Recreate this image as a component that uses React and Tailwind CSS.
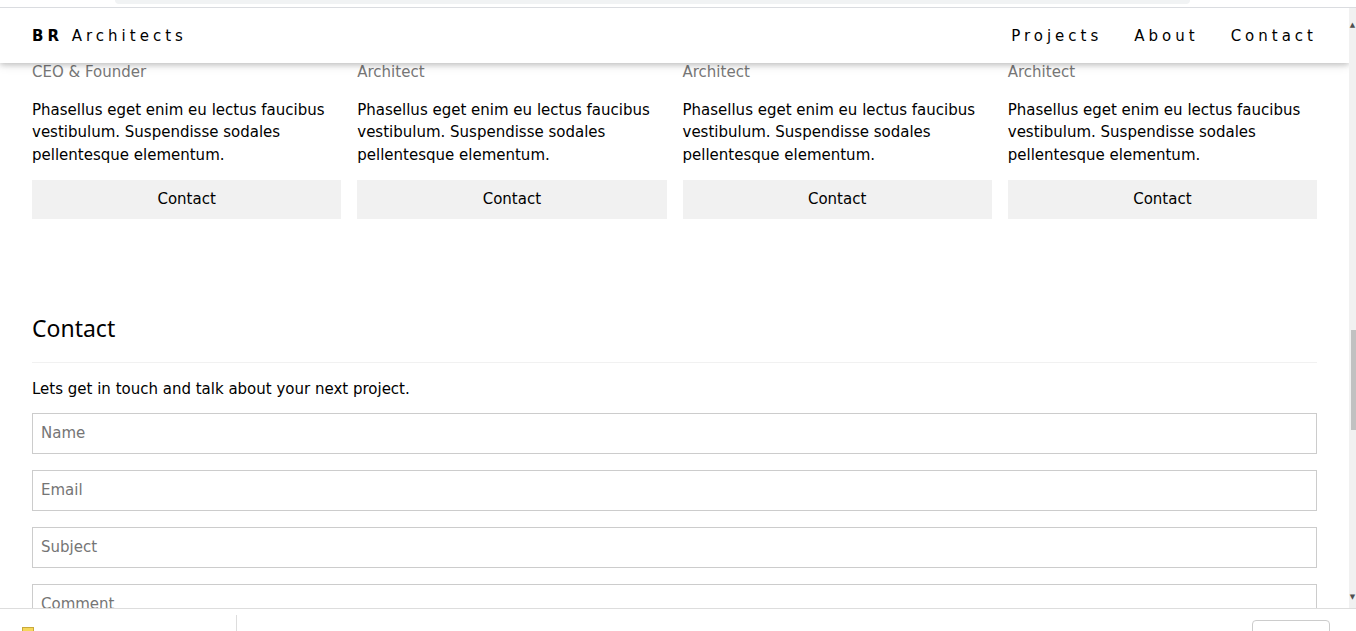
import React from 'react';

const members = [
  { role: 'CEO & Founder' },
  { role: 'Architect' },
  { role: 'Architect' },
  { role: 'Architect' },
];

export default function App() {
  return (
    <div className="h-screen w-full bg-white overflow-hidden flex flex-col text-black text-[15px] leading-[1.5] font-['DejaVu_Sans','Verdana',sans-serif]">
      {/* browser chrome remnant */}
      <div className="h-2 shrink-0 relative border-b border-[#dadce0]">
        <div className="absolute left-[115px] right-[166px] top-0 h-[4px] bg-[#f1f3f4] rounded-b-[8px]"></div>
      </div>

      <div className="flex-1 flex min-h-0">
        <main className="flex-1 relative overflow-hidden">
          {/* Navbar */}
          <header className="absolute top-0 left-0 right-0 z-10 h-[55px] pt-px bg-white px-4 flex items-center justify-between tracking-[4px] shadow-[0_2px_5px_0_rgba(0,0,0,0.16),0_2px_10px_0_rgba(0,0,0,0.12)]">
            <a href="#" className="px-4 py-2">
              <b>BR</b> Architects
            </a>
            <nav className="flex">
              <a href="#" className="px-4 py-2">Projects</a>
              <a href="#" className="px-4 py-2">About</a>
              <a href="#" className="px-4 py-2">Contact</a>
            </nav>
          </header>

          {/* Team */}
          <div className="px-8 pt-[53px]">
            <div className="grid grid-cols-4 gap-4">
              {members.map((m, i) => (
                <div key={i}>
                  <p className="text-[#777]">{m.role}</p>
                  <p className="mt-[15px]">
                    Phasellus eget enim eu lectus faucibus vestibulum. Suspendisse sodales pellentesque elementum.
                  </p>
                  <button className="mt-[14px] w-full h-[39px] bg-[#f1f1f1] text-center">Contact</button>
                </div>
              ))}
            </div>

            {/* Contact */}
            <h3 className="mt-[75px] py-4 border-b border-[#f1f1f1] text-[23px] leading-[36px] font-['Noto_Sans','Liberation_Sans',sans-serif] font-normal">
              Contact
            </h3>
            <p className="mt-[15px]">Lets get in touch and talk about your next project.</p>
            <div className="mt-[12px] flex flex-col gap-4">
              <input className="h-[41px] px-2 border border-[#ccc] placeholder:text-[#757575] outline-none" placeholder="Name" />
              <input className="h-[41px] px-2 border border-[#ccc] placeholder:text-[#757575] outline-none" placeholder="Email" />
              <input className="h-[41px] px-2 border border-[#ccc] placeholder:text-[#757575] outline-none" placeholder="Subject" />
              <input className="h-[41px] px-2 border border-[#ccc] placeholder:text-[#757575] outline-none" placeholder="Comment" />
            </div>
          </div>
        </main>

        {/* Scrollbar */}
        <div className="w-[7px] shrink-0 bg-[#f1f1f1] relative flex flex-col items-center">
          <span className="text-[7px] leading-[10px] mt-[12px] text-[#505050]">▲</span>
          <div className="absolute left-[2px] right-0 top-[322px] h-[100px] bg-[#c1c1c1]"></div>
          <span className="mt-auto mb-[6px] text-[7px] leading-[10px] text-[#505050]">▼</span>
        </div>
      </div>

      {/* bottom bar */}
      <div className="h-[23px] shrink-0 border-t border-[#ddd] bg-white relative">
        <div className="absolute left-[22px] top-[18px] w-[12px] h-[6px] bg-[#f5d75a] border border-[#c9a93a]"></div>
        <div className="absolute left-[236px] top-[6px] bottom-0 w-px bg-[#ddd]"></div>
        <div className="absolute left-[1252px] top-[11px] w-[78px] h-[20px] border border-[#ccc] rounded-[4px]"></div>
      </div>
    </div>
  );
}
